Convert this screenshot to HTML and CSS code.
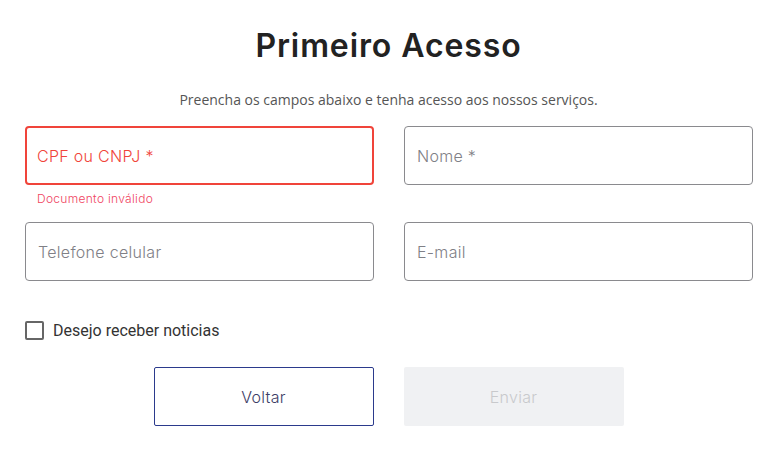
FILE: index.html
```html
<!DOCTYPE html>
<html lang="pt-BR">
<head>
<meta charset="utf-8">
<title>Primeiro Acesso</title>
<link rel="stylesheet" href="styles.css">
</head>
<body>
<main class="page">
  <h1 class="title">Primeiro Acesso</h1>
  <p class="subtitle">Preencha os campos abaixo e tenha acesso aos nossos serviços.</p>
  <form class="form">
    <div class="grid">
      <div class="field">
        <div class="input input-error">CPF ou CNPJ *</div>
        <div class="error">Documento inválido</div>
      </div>
      <div class="field">
        <div class="input">Nome *</div>
      </div>
      <div class="field">
        <div class="input">Telefone celular</div>
      </div>
      <div class="field">
        <div class="input">E-mail</div>
      </div>
    </div>
    <label class="check">
      <span class="box"></span>
      <span class="check-label">Desejo receber noticias</span>
    </label>
    <div class="actions">
      <button type="button" class="btn btn-outline">Voltar</button>
      <button type="button" class="btn btn-disabled">Enviar</button>
    </div>
  </form>
</main>
</body>
</html>
```

FILE: styles.css
```css
* { box-sizing: border-box; }
html, body { margin: 0; padding: 0; background: #fff; }
.page {
  width: 771px;
  padding: 26px 19px 0 25px;
}
.title {
  margin: 0;
  text-align: center;
  font-family: Inter, "Noto Sans", sans-serif;
  font-weight: 600;
  font-size: 32px;
  line-height: 40px;
  letter-spacing: 0.9px;
  color: #222;
}
.subtitle {
  margin: 24px 0 0;
  text-align: center;
  font-family: "Open Sans", sans-serif;
  font-size: 14px;
  line-height: 20px;
  color: #555;
}
.form { margin-top: 16px; }
.grid {
  display: grid;
  grid-template-columns: 349px 349px;
  column-gap: 30px;
  row-gap: 0;
}
.field { height: 96px; }
.input {
  height: 59px;
  border: 1px solid #8a8a8e;
  border-radius: 4px;
  padding: 0 12px;
  display: flex;
  align-items: center;
  font-family: Inter, "Noto Sans", sans-serif;
  font-weight: 300;
  font-size: 16px;
  color: #808086;
  letter-spacing: 0.3px;
}
.input-error {
  border: 2px solid #f0443a;
  padding: 0 10px;
  color: #f0443a;
}
.error {
  margin: 6px 0 0 12px;
  font-family: Inter, "Noto Sans", sans-serif;
  font-weight: 300;
  font-size: 12px;
  line-height: 16px;
  color: #f0445f;
  letter-spacing: 0.3px;
}
.check {
  display: flex;
  align-items: center;
  gap: 9px;
  margin-top: 2px;
  height: 20px;
}
.box {
  width: 19px;
  height: 19px;
  border: 2px solid #666;
  border-radius: 2px;
}
.check-label {
  font-family: Roboto, sans-serif;
  font-size: 16px;
  color: #333;
}
.actions {
  display: flex;
  justify-content: center;
  gap: 30px;
  margin-top: 27px;
}
.btn {
  width: 220px;
  height: 59px;
  font-family: Inter, "Noto Sans", sans-serif;
  font-weight: 300;
  font-size: 16px;
  letter-spacing: 0.3px;
  border-radius: 2px;
}
.btn-outline {
  background: #fff;
  border: 1px solid #2b3a8c;
  color: #3d3d66;
}
.btn-disabled {
  background: #f0f1f3;
  border: none;
  color: #c8c9cc;
}
```
